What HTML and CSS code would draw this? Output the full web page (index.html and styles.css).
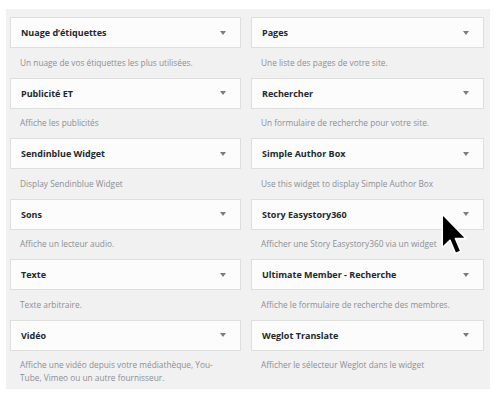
FILE: index.html
```html
<!DOCTYPE html>
<html lang="fr">
<head>
    <meta charset="UTF-8">
    <title>Widgets disponibles</title>
    <link rel="stylesheet" href="styles.css">
</head>
<body>
    <div class="panel">
        <div class="widget">
            <div class="widget-top"><span>Nuage d’étiquettes</span><i class="arrow"></i></div>
            <p class="desc">Un nuage de vos étiquettes les plus utilisées.</p>
        </div>
        <div class="widget">
            <div class="widget-top"><span>Pages</span><i class="arrow"></i></div>
            <p class="desc">Une liste des pages de votre site.</p>
        </div>
        <div class="widget">
            <div class="widget-top"><span>Publicité ET</span><i class="arrow"></i></div>
            <p class="desc">Affiche les publicités</p>
        </div>
        <div class="widget">
            <div class="widget-top"><span>Rechercher</span><i class="arrow"></i></div>
            <p class="desc">Un formulaire de recherche pour votre site.</p>
        </div>
        <div class="widget">
            <div class="widget-top"><span>Sendinblue Widget</span><i class="arrow"></i></div>
            <p class="desc">Display Sendinblue Widget</p>
        </div>
        <div class="widget">
            <div class="widget-top"><span>Simple Author Box</span><i class="arrow"></i></div>
            <p class="desc">Use this widget to display Simple Author Box</p>
        </div>
        <div class="widget">
            <div class="widget-top"><span>Sons</span><i class="arrow"></i></div>
            <p class="desc">Affiche un lecteur audio.</p>
        </div>
        <div class="widget">
            <div class="widget-top"><span>Story Easystory360</span><i class="arrow"></i></div>
            <p class="desc">Afficher une Story Easystory360 via un widget</p>
        </div>
        <div class="widget">
            <div class="widget-top"><span>Texte</span><i class="arrow"></i></div>
            <p class="desc">Texte arbitraire.</p>
        </div>
        <div class="widget">
            <div class="widget-top"><span>Ultimate Member - Recherche</span><i class="arrow"></i></div>
            <p class="desc">Affiche le formulaire de recherche des membres.</p>
        </div>
        <div class="widget">
            <div class="widget-top"><span>Vidéo</span><i class="arrow"></i></div>
            <p class="desc">Affiche une vidéo depuis votre médiathèque, You-Tube, Vimeo ou un autre fournisseur.</p>
        </div>
        <div class="widget">
            <div class="widget-top"><span>Weglot Translate</span><i class="arrow"></i></div>
            <p class="desc">Afficher le sélecteur Weglot dans le widget</p>
        </div>
    </div>

    <!-- mouse pointer over the list -->
    <svg class="cursor" width="27" height="43" viewBox="0 0 13 21">
        <path d="M0.5 0.5 L0.5 17 L4.3 13.3 L7 19.8 L9.6 18.7 L7 12.5 L12.3 12.5 Z" fill="#000" stroke="#fff" stroke-width="0.8" stroke-linejoin="round"/>
    </svg>
</body>
</html>
```

FILE: styles.css
```css
body {
    margin: 0;
    background: #fff;
    font-family: "Open Sans", "Noto Sans", sans-serif;
}
.panel {
    margin: 9px 0 0 6px;
    width: 474px;
    padding: 8px 6px 4.5px 4px;
    background: #f1f1f1;
    display: grid;
    grid-template-columns: 231px 233px;
    column-gap: 10px;
    row-gap: 8.6px;
    align-items: start;
}
.widget-top {
    height: 31px;
    box-sizing: border-box;
    display: flex;
    align-items: center;
    justify-content: space-between;
    padding: 0 14px 0 10px;
    background: #fcfcfc;
    border: 1px solid #dedede;
    font-size: 9px;
    font-weight: 700;
    color: #23282d;
}
.arrow {
    width: 0;
    height: 0;
    border-left: 3px solid transparent;
    border-right: 3px solid transparent;
    border-top: 4px solid #7a7d80;
}
.desc {
    margin: 0;
    padding: 8.5px 10px 0 10px;
    font-size: 8.3px;
    line-height: 12.5px;
    color: #8c8f94;
}
.cursor {
    position: absolute;
    left: 441px;
    top: 213px;
}
```
